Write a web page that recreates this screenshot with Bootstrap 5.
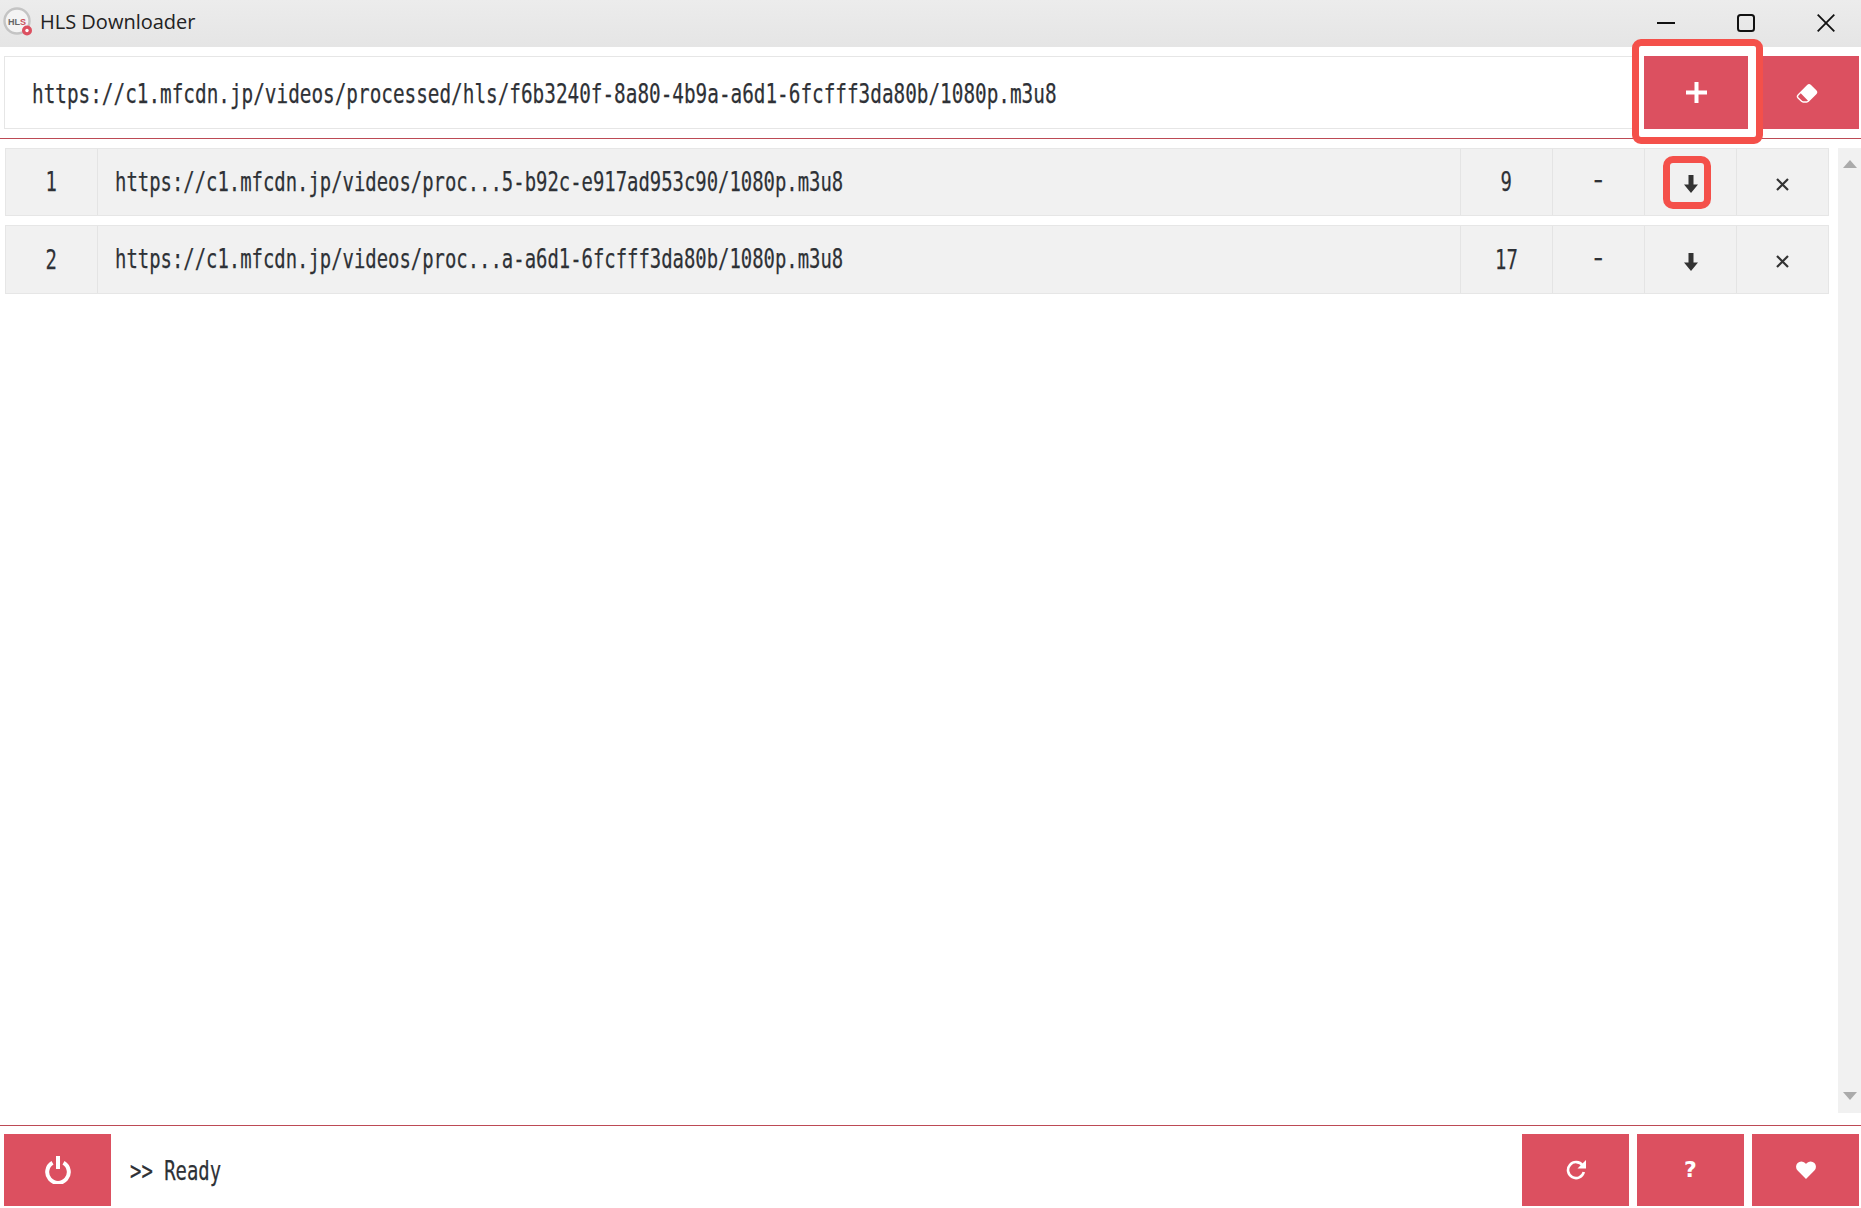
<!DOCTYPE html>
<html lang="en">
<head>
<meta charset="utf-8">
<title>HLS Downloader</title>
<link href="https://cdn.jsdelivr.net/npm/bootstrap@5.3.0/dist/css/bootstrap.min.css" rel="stylesheet">
<style>
html,body{height:100%;margin:0;overflow:hidden;background:#fff}
.app-shell{height:1208px}
.title-strip{height:47px;padding-bottom:4px;background:linear-gradient(#ececec,#e5e5e5);font:20px "Open Sans",sans-serif;color:#222}
.title-logo{margin:0 7px 0 3px}
.title-ctl{position:absolute;top:-1px;height:47px;display:flex;align-items:center}
.tool-strip{height:92px;padding:9px 2px 0 4px;border-bottom:1px solid #bd4a55}
.url-box{height:73px;width:1632px;border:1px solid #e6e6e6;border-radius:0;padding:2px 0 0 27px;display:flex;align-items:center;background:#fff}
.rose-btn{background:#dc5060;border:0;border-radius:0;color:#fff;display:flex;align-items:center;justify-content:center;padding:0;flex:none}
.rose-btn:hover{background:#dc5060;color:#fff}
.btn-add{width:104px;height:73px;margin-left:8px}
.btn-erase{width:104px;height:73px;margin-left:7px}
.btn-foot{width:107px;height:72px}
.q-mark{font:bold 22px "DejaVu Sans",sans-serif;line-height:1}
.narrow{display:inline-block;font:27.4px/1 "DejaVu Sans Mono",monospace;color:#2e3136;white-space:nowrap;transform:scaleX(.69);transform-origin:left center;-webkit-text-stroke:.25px #2e3136}
.narrow-wide{transform:scaleX(.706)}
.narrow-c{transform-origin:center}
.narrow-dash{transform:scaleX(.52);-webkit-text-stroke:0}
.list-zone{min-height:0;padding-top:9px}
.job-list{width:1825px;margin-left:5px;gap:9px}
.job-row{height:68px;background:#f1f1f1;border:1px solid #e6e6e6}
.job-row + .job-row{height:69px}
.job-cell{width:92px;flex:none;border-left:1px solid #e4e4e4;display:flex;align-items:center;justify-content:center}
.job-cell:first-child{border-left:0;width:91px}
.job-url{flex:1;border-left:1px solid #e4e4e4;padding:0 0 1px 17px;display:flex;align-items:center;overflow:hidden}
.job-icon{padding:4px 0 0}
.minus-cell{padding-bottom:2px}
.scroll-rail{width:23px;margin-left:9px;height:965px;background:#f1f1f1;flex:none;padding:12px 0 13px}
.foot-strip{height:83px;margin-top:12px;border-top:1px solid #bd4a55;padding:8px 2px 0 4px;flex:none}
.foot-text{margin-left:19px}
.mark-big{position:absolute;left:-4px;top:-17px;width:131px;height:105px;border:7px solid #f4504a;border-radius:9px;box-shadow:inset 0 0 0 3px #fff;pointer-events:none;z-index:3}
.mark-small{position:absolute;left:18px;top:7px;width:48px;height:53px;border:7px solid #f4504a;border-radius:10px;pointer-events:none}
</style>
</head>
<body>
<div class="app-shell d-flex flex-column position-relative">
  <header class="title-strip d-flex align-items-center position-relative">
    <svg class="title-logo" width="30" height="30" viewBox="0 0 30 30"><circle cx="14" cy="14" r="12.5" fill="#f4f4f4" stroke="#c4c4c4" stroke-width="2.4"/><text x="5" y="17.5" font-family="Liberation Sans,sans-serif" font-size="9" font-weight="700" fill="#666">HL<tspan fill="#c9505c">S</tspan></text><circle cx="24" cy="23.5" r="5" fill="#dc5060"/><circle cx="24" cy="23.5" r="1.7" fill="#fff"/></svg>
    <span>HLS Downloader</span>
    <div class="title-ctl" style="left:1657px"><svg width="18" height="18" viewBox="0 0 18 18"><path d="M0 9h18" stroke="#111" stroke-width="2"/></svg></div>
    <div class="title-ctl" style="left:1737px"><svg width="18" height="18" viewBox="0 0 18 18"><rect x="1" y="1" width="16" height="16" rx="2.5" fill="none" stroke="#111" stroke-width="2"/></svg></div>
    <div class="title-ctl" style="left:1817px"><svg width="18" height="18" viewBox="0 0 18 18"><path d="M.7.7l16.6 16.6M17.3.7L.7 17.3" stroke="#111" stroke-width="1.8"/></svg></div>
  </header>

  <div class="tool-strip d-flex flex-none">
    <div class="url-box form-control"><span class="narrow narrow-wide">https://c1.mfcdn.jp/videos/processed/hls/f6b3240f-8a80-4b9a-a6d1-6fcfff3da80b/1080p.m3u8</span></div>
    <div class="position-relative">
      <button class="btn rose-btn btn-add" type="button" aria-label="Add"><svg width="21" height="21" viewBox="0 0 21 21"><path d="M10.5 0v21M0 10.5h21" stroke="#fff" stroke-width="4"/></svg></button>
      <div class="mark-big"></div>
    </div>
    <button class="btn rose-btn btn-erase" type="button" aria-label="Clear"><svg width="22" height="22" viewBox="0 0 16 16" fill="#fff"><path d="M8.086 2.207a2 2 0 0 1 2.828 0l3.879 3.879a2 2 0 0 1 0 2.828l-5.5 5.5A2 2 0 0 1 7.879 15H5.12a2 2 0 0 1-1.414-.586l-2.5-2.5a2 2 0 0 1 0-2.828l6.879-6.879zm.66 11.34L3.453 8.254 1.914 9.793a1 1 0 0 0 0 1.414l2.5 2.5a1 1 0 0 0 .707.293H7.88a1 1 0 0 0 .707-.293l.16-.16z"/></svg></button>
  </div>

  <div class="list-zone d-flex flex-grow-1 align-items-start">
    <div class="job-list d-flex flex-column">
      <div class="job-row d-flex">
        <div class="job-cell"><span class="narrow narrow-c">1</span></div>
        <div class="job-url"><span class="narrow">https://c1.mfcdn.jp/videos/proc...5-b92c-e917ad953c90/1080p.m3u8</span></div>
        <div class="job-cell"><span class="narrow narrow-c">9</span></div>
        <div class="job-cell minus-cell"><span class="narrow narrow-c narrow-dash">−</span></div>
        <div class="job-cell job-icon position-relative"><svg width="14" height="18" viewBox="0 0 14 18"><path d="M4.500 0h5v9.500h4.500l-7 8.500-7-8.500h4.500z" fill="#333"/></svg><div class="mark-small"></div></div>
        <div class="job-cell job-icon"><svg width="13" height="13" viewBox="0 0 13 13"><path d="M1 1l11 11M12 1L1 12" stroke="#333" stroke-width="2.2"/></svg></div>
      </div>
      <div class="job-row d-flex">
        <div class="job-cell"><span class="narrow narrow-c">2</span></div>
        <div class="job-url"><span class="narrow">https://c1.mfcdn.jp/videos/proc...a-a6d1-6fcfff3da80b/1080p.m3u8</span></div>
        <div class="job-cell"><span class="narrow narrow-c">17</span></div>
        <div class="job-cell minus-cell"><span class="narrow narrow-c narrow-dash">−</span></div>
        <div class="job-cell job-icon"><svg width="14" height="18" viewBox="0 0 14 18"><path d="M4.500 0h5v9.500h4.500l-7 8.500-7-8.500h4.500z" fill="#333"/></svg></div>
        <div class="job-cell job-icon"><svg width="13" height="13" viewBox="0 0 13 13"><path d="M1 1l11 11M12 1L1 12" stroke="#333" stroke-width="2.2"/></svg></div>
      </div>
    </div>
    <div class="scroll-rail d-flex flex-column justify-content-between align-items-center">
      <svg width="14" height="8" viewBox="0 0 14 8"><path d="M7 0l7 8H0z" fill="#aaa"/></svg>
      <svg width="14" height="8" viewBox="0 0 14 8"><path d="M7 8L0 0h14z" fill="#aaa"/></svg>
    </div>
  </div>

  <footer class="foot-strip d-flex">
    <button class="btn rose-btn btn-foot" type="button" aria-label="Power"><svg width="26" height="28" viewBox="0 0 26 28" fill="none" stroke="#fff" stroke-width="4"><path d="M7.500 6.800a10.800 10.800 0 1 0 11 0"/><path d="M13 0v13"/></svg></button>
    <div class="foot-text d-flex align-items-center flex-grow-1"><span class="narrow">&gt;&gt; Ready</span></div>
    <div class="d-flex gap-2">
      <button class="btn rose-btn btn-foot" type="button" aria-label="Refresh"><svg width="20" height="20" viewBox="0 0 20 20"><path d="M16.600 5.500A8 8 0 1 0 17.800 12" fill="none" stroke="#fff" stroke-width="2.600"/><path d="M20 0v8.500h-8.500z" fill="#fff"/></svg></button>
      <button class="btn rose-btn btn-foot" type="button"><span class="q-mark">?</span></button>
      <button class="btn rose-btn btn-foot" type="button" aria-label="Favourite"><svg width="20" height="18" viewBox="0 0 20 18"><path d="M10 18L1.600 9.600A5.300 5.300 0 0 1 9.100 2.100L10 3l.9-.9a5.300 5.300 0 0 1 7.500 7.500z" fill="#fff"/></svg></button>
    </div>
  </footer>
</div>
</body>
</html>
